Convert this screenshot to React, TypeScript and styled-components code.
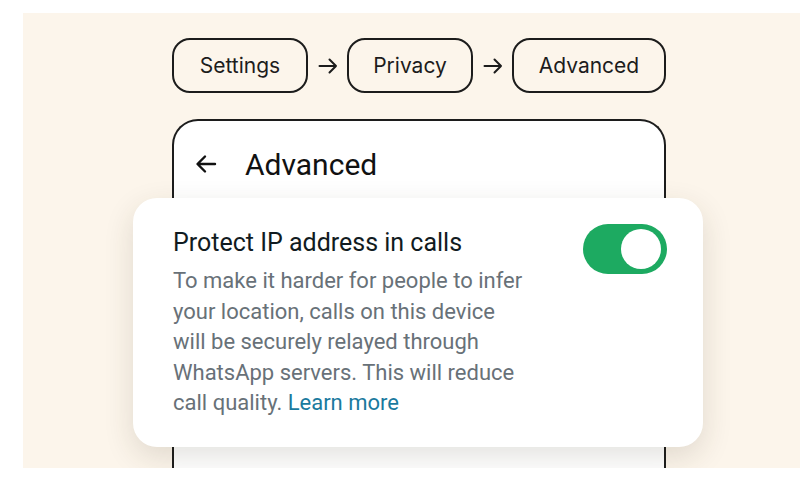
import React, { useState } from "react";
import styled, { createGlobalStyle } from "styled-components";

const GlobalStyle = createGlobalStyle`
  html, body {
    margin: 0;
    padding: 0;
    background: #ffffff;
  }
`;

const Stage = styled.div`
  margin: 13px 0 0 23px;
  height: 455px;
  background: #fcf5eb;
  overflow: hidden;
  padding: 25px 0 0 149px;
  box-sizing: border-box;
`;

const Column = styled.div`
  width: 494px;
  display: flex;
  flex-direction: column;
`;

const Crumbs = styled.div`
  display: flex;
  align-items: center;
  justify-content: space-between;
  height: 55px;
`;

const Crumb = styled.div<{ w: number }>`
  width: ${(p) => p.w}px;
  height: 55px;
  box-sizing: border-box;
  border: 2px solid #1c1c1c;
  border-radius: 18px;
  display: flex;
  align-items: center;
  justify-content: center;
  font-family: Inter, "Liberation Sans", sans-serif;
  font-size: 21px;
  color: #1c1c1c;
`;

const Phone = styled.div`
  margin-top: 26px;
  height: 380px;
  border: 2px solid #1c1c1c;
  border-bottom: none;
  border-radius: 26px 26px 0 0;
  background: #ffffff;
  display: flex;
  flex-direction: column;
`;

const Header = styled.div`
  display: flex;
  align-items: center;
  gap: 27px;
  height: 76px;
  padding: 10px 0 0 20px;
  box-sizing: border-box;
  font-family: Roboto, "Liberation Sans", sans-serif;
  font-size: 30px;
  color: #111;
`;

const Card = styled.div`
  margin: 1px -39px 0 -41px;
  background: #ffffff;
  border-radius: 24px;
  box-shadow: 0 10px 30px rgba(60, 50, 30, 0.14);
  padding: 30px 36px 28px 40px;
  display: flex;
  justify-content: space-between;
  align-items: flex-start;
  font-family: Roboto, "Liberation Sans", sans-serif;
`;

const TextBlock = styled.div`
  width: 356px;
`;

const Title = styled.div`
  font-size: 25px;
  color: #111b21;
  line-height: 30px;
  white-space: nowrap;
`;

const Body = styled.div`
  margin-top: 8px;
  font-size: 22px;
  line-height: 30.5px;
  color: #687178;
`;

const Link = styled.a`
  color: #1a7a9e;
  text-decoration: none;
`;

const Switch = styled.button<{ on: boolean }>`
  flex: none;
  margin-top: -4px;
  width: 84px;
  height: 50px;
  border: none;
  border-radius: 25px;
  padding: 0 6px;
  background: ${(p) => (p.on ? "#1daa61" : "#b9c0c4")};
  display: flex;
  align-items: center;
  justify-content: ${(p) => (p.on ? "flex-end" : "flex-start")};
  cursor: pointer;
  span {
    width: 40px;
    height: 40px;
    border-radius: 50%;
    background: #ffffff;
  }
`;

const BackArrow = () => (
  <svg width="24" height="24" viewBox="0 0 24 24" fill="none">
    <path
      d="M21 12H4M11 4.5L3.5 12L11 19.5"
      stroke="#111"
      strokeWidth="2.4"
      strokeLinecap="round"
      strokeLinejoin="round"
    />
  </svg>
);

const NextArrow = () => (
  <svg width="20" height="20" viewBox="0 0 20 20" fill="none">
    <path
      d="M1.5 10H18M11.5 3.5L18 10L11.5 16.5"
      stroke="#1c1c1c"
      strokeWidth="2"
      strokeLinecap="round"
      strokeLinejoin="round"
    />
  </svg>
);

const App = () => {
  const [on, setOn] = useState(true);

  return (
    <>
      <GlobalStyle />
      <Stage>
        <Column>
          <Crumbs>
            <Crumb w={136}>Settings</Crumb>
            <NextArrow />
            <Crumb w={126}>Privacy</Crumb>
            <NextArrow />
            <Crumb w={154}>Advanced</Crumb>
          </Crumbs>
          <Phone>
            <Header>
              <BackArrow />
              Advanced
            </Header>
            <Card>
              <TextBlock>
                <Title>Protect IP address in calls</Title>
                <Body>
                  To make it harder for people to infer your location, calls on
                  this device will be securely relayed through WhatsApp
                  servers. This will reduce call quality.{" "}
                  <Link href="#">Learn more</Link>
                </Body>
              </TextBlock>
              <Switch on={on} onClick={() => setOn(!on)}>
                <span />
              </Switch>
            </Card>
          </Phone>
        </Column>
      </Stage>
    </>
  );
};

export default App;
